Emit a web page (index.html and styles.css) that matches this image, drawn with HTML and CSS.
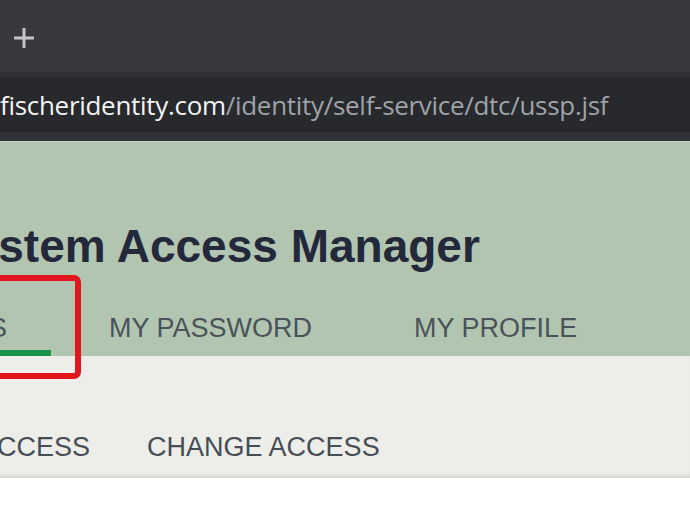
FILE: index.html
```html
<!DOCTYPE html>
<html lang="en">
<head>
    <meta charset="UTF-8">
    <meta name="viewport" content="width=device-width, initial-scale=1.0">
    <title>System Access Manager</title>
    <link rel="stylesheet" href="styles.css">
</head>
<body>
    <div class="tabstrip">
        <svg class="new-tab" width="22" height="22" viewBox="0 0 22 22">
            <path d="M11 1v20M1 11h20" stroke="#c3c5c7" stroke-width="3" fill="none"/>
        </svg>
    </div>
    <div class="toolbar">
        <div class="omnibox">
            <span class="host">fischeridentity.com</span><span class="path">/identity/self-service/dtc/ussp.jsf</span>
        </div>
    </div>

    <div class="app-header">
        <h1 class="title">System Access Manager</h1>
        <nav class="tabs">
            <a class="tab active">MY ACCESS</a>
            <a class="tab">MY PASSWORD</a>
            <a class="tab">MY PROFILE</a>
        </nav>
        <div class="highlight"></div>
    </div>

    <div class="subnav">
        <a class="sub-item">REQUEST ACCESS</a>
        <a class="sub-item">CHANGE ACCESS</a>
    </div>
</body>
</html>
```

FILE: styles.css
```css
body {
    margin: 0;
    overflow: hidden;
    background-color: #fff;
    font-family: "Liberation Sans", Arial, sans-serif;
}
.tabstrip {
    height: 72px;
    background-color: #37383b;
    display: flex;
    align-items: center;
    padding-left: 13px;
}
.new-tab {
    margin-top: 4px;
}
.toolbar {
    background-color: #303134;
    padding: 6px 0 10px;
}
.omnibox {
    height: 54px;
    background-color: #28292c;
    display: flex;
    align-items: center;
    white-space: nowrap;
    font-family: "Open Sans", "Noto Sans", sans-serif;
    font-size: 26px;
    letter-spacing: -0.3px;
}
.host {
    color: #f2f3f5;
}
.path {
    color: #9ea3a8;
}
.app-header {
    position: relative;
    background-color: #b2c5b1;
    padding-top: 78px;
    border-top: 1px solid #c6d4c4;
    margin-top: -1px;
}
.title {
    margin: 0 0 40px -58px;
    font-size: 46px;
    line-height: 52px;
    font-weight: bold;
    color: #23283a;
    white-space: nowrap;
}
.tabs {
    display: flex;
    gap: 3px;
    margin-left: -205px;
}
.tab {
    padding: 0 44px 6px 55px;
    font-size: 27px;
    line-height: 32px;
    color: #4b5259;
    border-bottom: 6px solid transparent;
    white-space: nowrap;
}
.tab.active {
    border-bottom-color: #17934b;
}
.highlight {
    position: absolute;
    left: -20px;
    top: 133px;
    width: 89px;
    height: 92px;
    border: 6px solid #e3151c;
    border-radius: 7px;
}
.subnav {
    display: flex;
    gap: 57px;
    margin-left: -157px;
    padding: 75px 0 15px;
    background-color: #ededea;
    box-shadow: inset 0 -4px 4px -2px rgba(0, 0, 0, 0.12), 0 2px 2px rgba(0, 0, 0, 0.08);
}
.sub-item {
    font-size: 27px;
    line-height: 32px;
    color: #474d55;
    white-space: nowrap;
}
```
